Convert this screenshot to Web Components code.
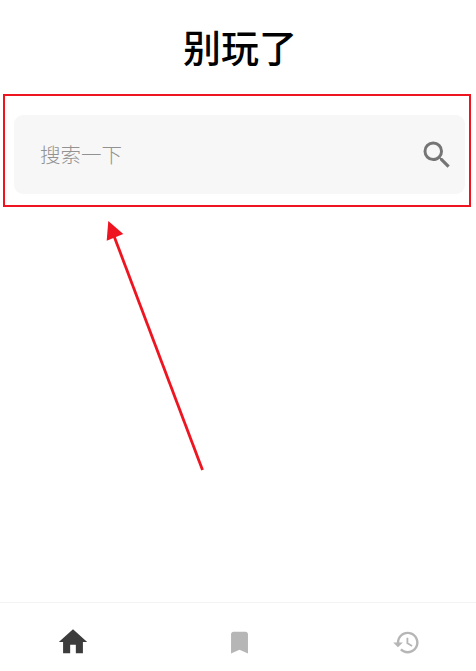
<!DOCTYPE html>
<html lang="zh">
<head>
<meta charset="utf-8">
<title>别玩了</title>
<style>
    html, body { margin: 0; height: 100%; background: #fff; overflow: hidden; }
    body { font-family: "Noto Sans CJK SC", "Noto Sans", sans-serif; }
</style>
</head>
<body>
<app-shell>
    <page-title slot="title">别玩了</page-title>
    <search-bar slot="search" placeholder="搜索一下"></search-bar>
    <tab-bar slot="tabs">
        <tab-item icon="home" size="34" active></tab-item>
        <tab-item icon="bookmark" size="29"></tab-item>
        <tab-item icon="history" size="29"></tab-item>
    </tab-bar>
    <red-annotation slot="overlay"></red-annotation>
</app-shell>

<script>
// Material icon paths used on the page
const ICONS = {
    search: "M15.5 14h-.79l-.28-.27A6.471 6.471 0 0 0 16 9.5 6.5 6.5 0 1 0 9.5 16c1.61 0 3.09-.59 4.23-1.57l.27.28v.79l5 4.99L20.49 19l-4.99-5zm-6 0C7.01 14 5 11.99 5 9.5S7.01 5 9.5 5 14 7.01 14 9.5 11.99 14 9.5 14z",
    home: "M10 20v-6h4v6h5v-8h3L12 3 2 12h3v8z",
    bookmark: "M17 3H7c-1.1 0-1.99.9-1.99 2L5 21l7-3 7 3V5c0-1.1-.9-2-2-2z",
    history: "M13 3c-4.97 0-9 4.03-9 9H1l3.89 3.89.07.14L9 12H6c0-3.87 3.13-7 7-7s7 3.13 7 7-3.13 7-7 7c-1.93 0-3.68-.79-4.94-2.06l-1.42 1.42C8.27 19.99 10.51 21 13 21c4.97 0 9-4.03 9-9s-4.03-9-9-9zm-1 5v5l4.28 2.54.72-1.21-3.5-2.08V8H12z"
};

class AppShell extends HTMLElement {
    constructor() {
        super();
        this.attachShadow({ mode: "open" });
        this.shadowRoot.innerHTML = `
        <style>
            :host { display: flex; flex-direction: column; position: relative; height: 671px; overflow: hidden; }
            main { flex: 1; }
        </style>
        <slot name="title"></slot>
        <main><slot name="search"></slot></main>
        <slot name="tabs"></slot>
        <slot name="overlay"></slot>
        `;
    }
}

class PageTitle extends HTMLElement {
    constructor() {
        super();
        this.attachShadow({ mode: "open" });
        this.shadowRoot.innerHTML = `
        <style>
            :host { display: block; height: 96px; box-sizing: border-box; padding-top: 19px; padding-left: 4px; text-align: center; font-size: 38px; line-height: 54px; font-weight: 500; color: #000; }
        </style>
        <slot></slot>
        `;
    }
}

class SearchBar extends HTMLElement {
    constructor() {
        super();
        this.attachShadow({ mode: "open" });
        this.shadowRoot.innerHTML = `
        <style>
            :host { display: block; padding: 19px 11px 0 14px; }
            .box { display: flex; align-items: center; justify-content: space-between; height: 79px; padding: 0 10px 0 26px; background: #f7f7f7; border-radius: 9px; }
            .placeholder { font-size: 20.5px; font-weight: 300; line-height: 28px; margin-top: -2px; color: #929292; }
            svg { width: 36px; height: 36px; fill: #757575; display: block; }
        </style>
        <div class="box">
            <span class="placeholder"></span>
            <svg viewBox="0 0 24 24"><path d="${ICONS.search}"></path></svg>
        </div>
        `;
    }

    connectedCallback() {
        this.shadowRoot.querySelector(".placeholder").textContent = this.getAttribute("placeholder");
    }
}

class TabBar extends HTMLElement {
    constructor() {
        super();
        this.attachShadow({ mode: "open" });
        this.shadowRoot.innerHTML = `
        <style>
            :host { display: grid; grid-template-columns: repeat(3, 167px); justify-content: center; height: 69px; padding-left: 3px; border-top: 1px solid #f3f3f3; box-sizing: border-box; }
        </style>
        <slot></slot>
        `;
    }
}

class TabItem extends HTMLElement {
    constructor() {
        super();
        this.attachShadow({ mode: "open" });
    }

    connectedCallback() {
        const size = this.getAttribute("size");
        const color = this.hasAttribute("active") ? "#3c3c3c" : "#b6b6b6";
        this.shadowRoot.innerHTML = `
        <style>
            :host { display: flex; justify-content: center; align-items: center; height: 78px; }
            svg { display: block; fill: ${color}; }
        </style>
        <svg width="${size}" height="${size}" viewBox="0 0 24 24"><path d="${ICONS[this.getAttribute("icon")]}"></path></svg>
        `;
    }
}

// The red box and arrow drawn on top of the screenshot
class RedAnnotation extends HTMLElement {
    constructor() {
        super();
        this.attachShadow({ mode: "open" });
        this.shadowRoot.innerHTML = `
        <style>
            :host { position: absolute; inset: 0; pointer-events: none; }
            svg { display: block; }
        </style>
        <svg width="476" height="671" viewBox="0 0 476 671">
            <rect x="4" y="95" width="466" height="111" fill="none" stroke="#ee1520" stroke-width="2"></rect>
            <line x1="202.5" y1="470" x2="114" y2="236" stroke="#ee1520" stroke-width="2.8"></line>
            <polygon points="108.3,221 106.7,240.7 123.3,234" fill="#ee1520"></polygon>
        </svg>
        `;
    }
}

customElements.define("app-shell", AppShell);
customElements.define("page-title", PageTitle);
customElements.define("search-bar", SearchBar);
customElements.define("tab-bar", TabBar);
customElements.define("tab-item", TabItem);
customElements.define("red-annotation", RedAnnotation);
</script>
</body>
</html>
